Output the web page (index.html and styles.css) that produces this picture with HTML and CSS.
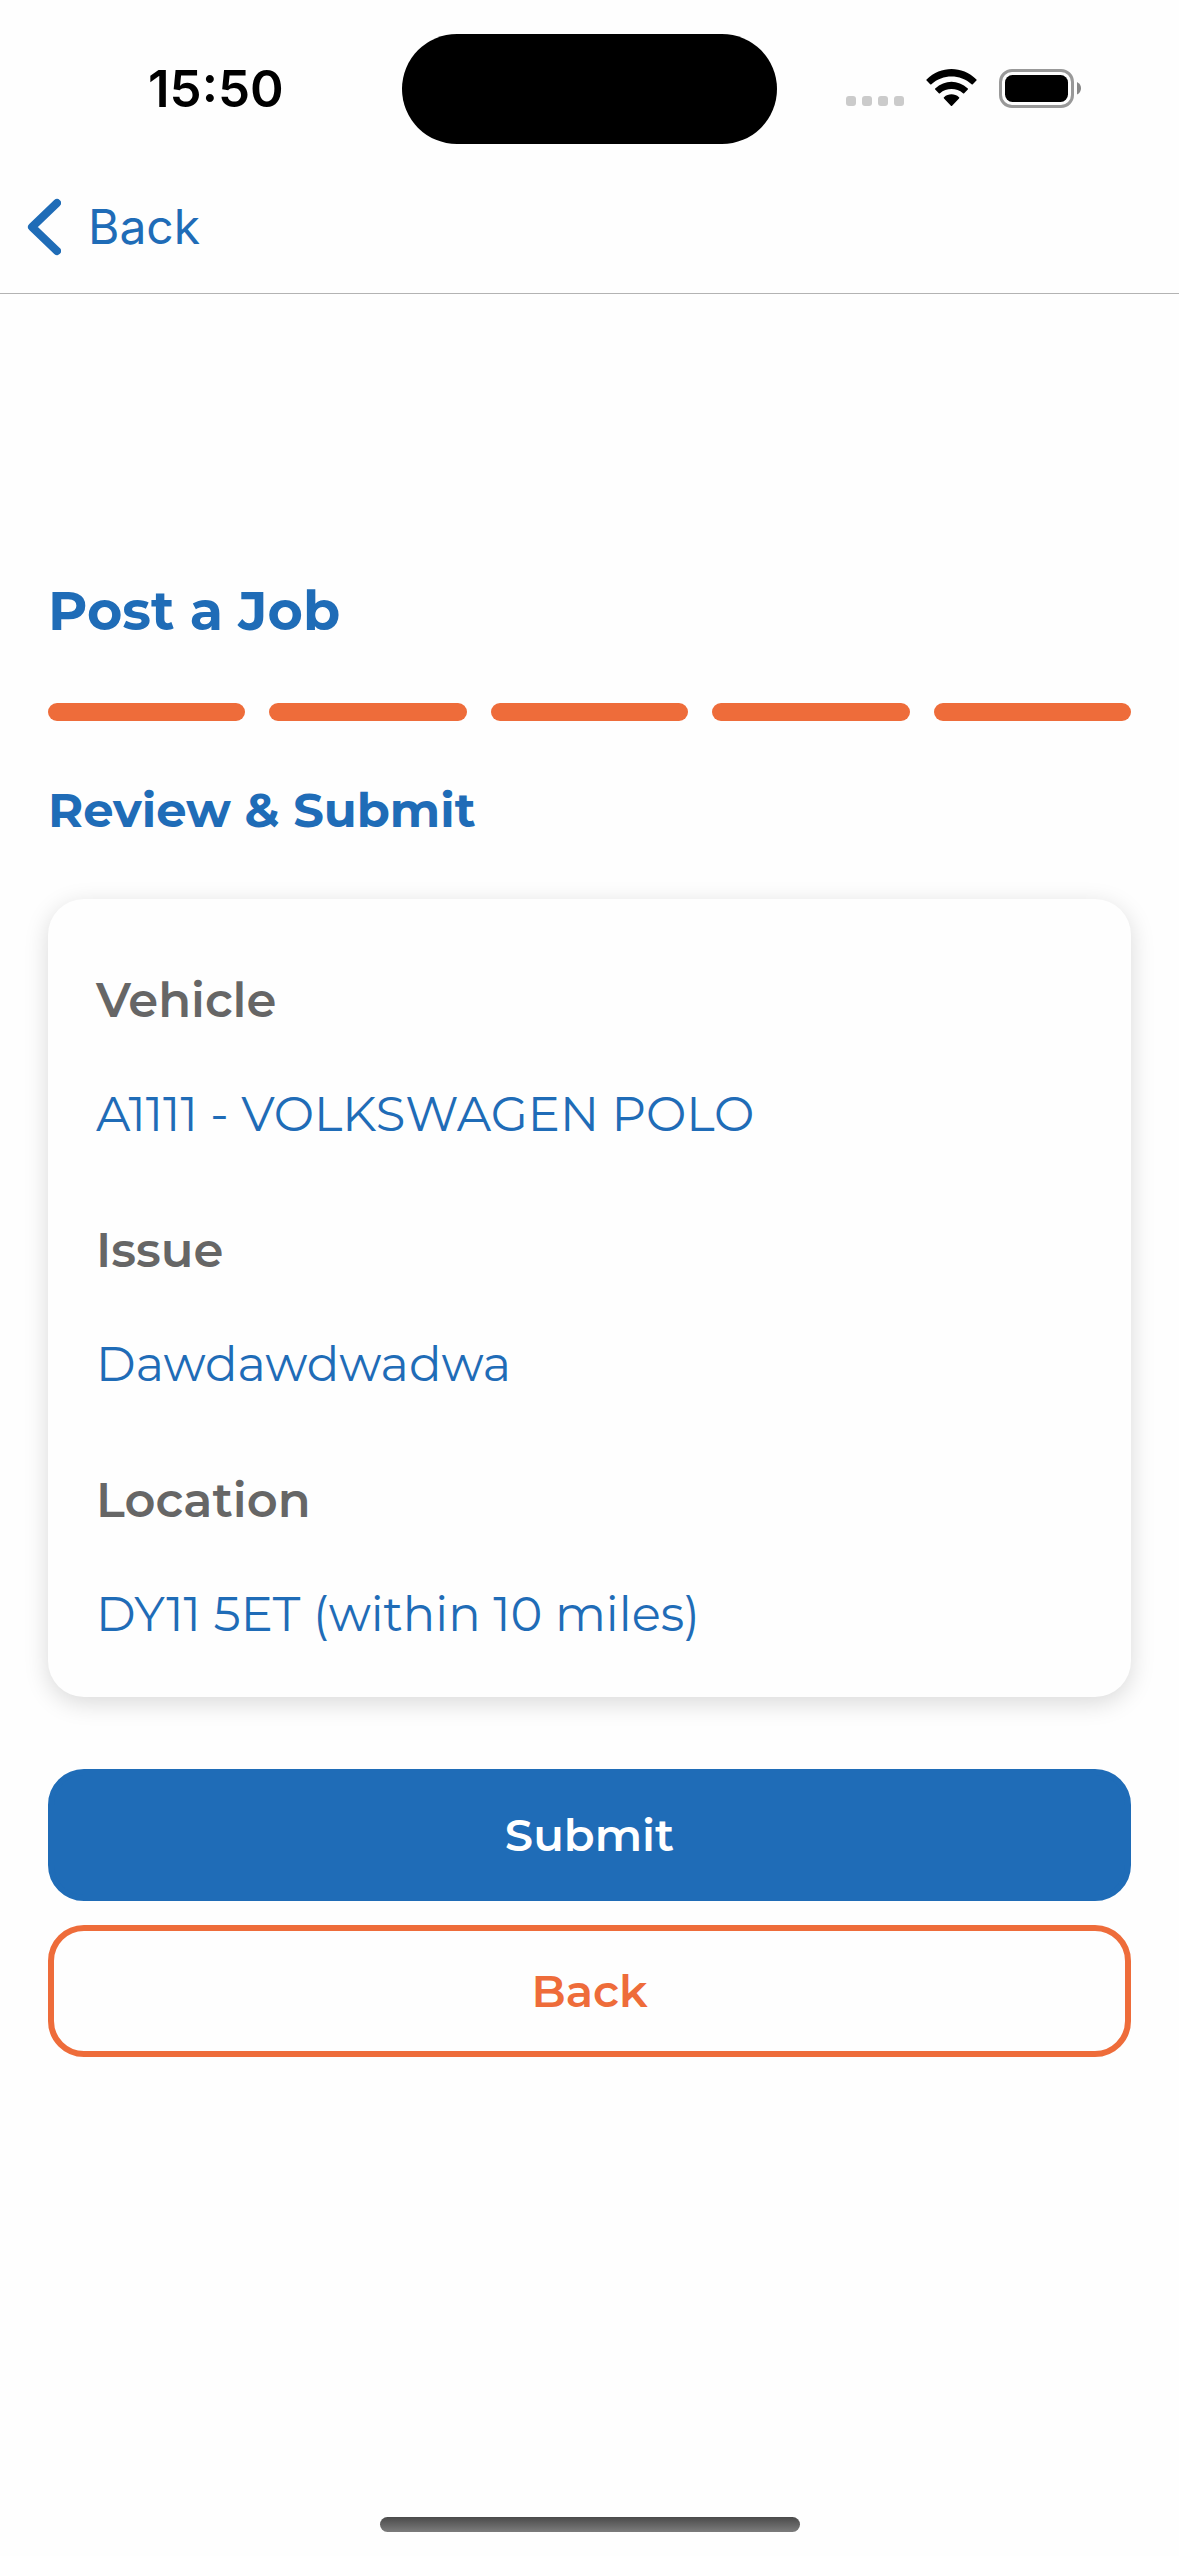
FILE: index.html
```html
<!DOCTYPE html>
<html lang="en">
<head>
  <meta charset="UTF-8" />
  <meta name="viewport" content="width=device-width, initial-scale=1" />
  <title>Post a Job</title>
  <link rel="stylesheet" href="styles.css">
</head>
<body>

  <div class="status-bar">
    <span class="time">15:50</span>
    <div class="island"></div>
    <div class="status-icons">
      <svg class="signal" width="58" height="12" viewBox="0 0 58 12" fill="#cbcbcb">
        <rect width="10" height="10" rx="3" />
        <rect x="16" width="10" height="10" rx="3" />
        <rect x="32" width="10" height="10" rx="3" />
        <rect x="48" width="10" height="10" rx="3" />
      </svg>
      <svg class="wifi" width="51" height="39" viewBox="0 0 51 39">
        <path d="M0.6 10.4 Q0 11 0.6 11.6 L4.2 15.3 Q4.8 15.9 5.4 15.3 C17 5 34 5 45.6 15.3 Q46.2 15.9 46.8 15.3 L50.4 11.6 Q51 11 50.4 10.4 C36 -3.4 15 -3.4 0.6 10.4 Z" />
        <path d="M9.2 19.4 Q8.6 20 9.2 20.6 L12.8 24.2 Q13.4 24.8 14 24.2 C20.5 18.6 30.5 18.6 37 24.2 Q37.6 24.8 38.2 24.2 L41.8 20.6 Q42.4 20 41.8 19.4 C32 10.4 19 10.4 9.2 19.4 Z" />
        <path d="M18 28.2 Q17.3 28.8 18 29.5 L24.9 36.7 Q25.5 37.3 26.1 36.7 L33 29.5 Q33.7 28.8 33 28.2 C28.6 24.4 22.4 24.4 18 28.2 Z" />
      </svg>
      <svg class="battery" width="82" height="39" viewBox="0 0 82 39">
        <rect x="1.5" y="1.5" width="72" height="36" rx="11.5" fill="none" stroke="#999" stroke-width="3" />
        <rect x="6" y="6" width="63" height="27" rx="7.5" />
        <path d="M78 13 Q82 15 82 19.2 Q82 23.5 78 25.5 Z" fill="#888" />
      </svg>
    </div>
  </div>

  <header class="nav-bar">
    <a href="#" class="nav-back">
      <svg width="34" height="58" viewBox="0 0 34 58" fill="none" stroke="currentColor" stroke-width="8" stroke-linecap="round" stroke-linejoin="round">
        <path d="M30 5 L5 29 L30 53" />
      </svg>
      <span>Back</span>
    </a>
  </header>

  <main class="content">
    <h1>Post a Job</h1>

    <div class="steps">
      <span class="step"></span>
      <span class="step"></span>
      <span class="step"></span>
      <span class="step"></span>
      <span class="step"></span>
    </div>

    <h2>Review &amp; Submit</h2>

    <dl class="card">
      <div class="field">
        <dt>Vehicle</dt>
        <dd>A1111 - VOLKSWAGEN POLO</dd>
      </div>
      <div class="field">
        <dt>Issue</dt>
        <dd>Dawdawdwadwa</dd>
      </div>
      <div class="field">
        <dt>Location</dt>
        <dd>DY11 5ET (within 10 miles)</dd>
      </div>
    </dl>

    <div class="actions">
      <button type="button" class="btn btn-primary">Submit</button>
      <button type="button" class="btn btn-outline">Back</button>
    </div>
  </main>

  <div class="home-indicator"></div>

</body>
</html>
```

FILE: styles.css
```css
* {
  box-sizing: border-box;
}

body {
  margin: 0;
  min-height: 100vh;
  display: flex;
  flex-direction: column;
  background-color: #fefefe;
  font-family: Montserrat, Inter, sans-serif;
  color: #1f6cb7;
}

/* phone status bar */
.status-bar {
  display: grid;
  grid-template-columns: 1fr 375px 1fr;
  align-items: center;
  padding: 34px 0 17px;
  color: #000;
}

.time {
  padding-left: 148px;
  font-family: Inter, sans-serif;
  font-size: 51px;
  font-weight: 600;
  line-height: 60px;
}

.island {
  height: 110px;
  border-radius: 55px;
  background-color: #000;
}

.status-icons {
  display: flex;
  justify-content: flex-end;
  align-items: flex-end;
  gap: 22px;
  padding: 0 98px 2px 0;
}

/* navigation */
.nav-bar {
  border-bottom: 1px solid #b3b3b3;
  padding: 36px 27px;
}

.nav-back {
  display: flex;
  align-items: center;
  gap: 27px;
  width: fit-content;
  color: #1f6cb7;
  font-family: Inter, sans-serif;
  font-size: 48px;
  line-height: 60px;
  text-decoration: none;
}

/* form */
.content {
  flex: 1;
  padding: 284px 48px 72px;
}

h1 {
  margin: 0 0 59px;
  font-size: 54px;
  font-weight: 700;
  line-height: 66px;
}

.steps {
  display: flex;
  gap: 24px;
}

.step {
  flex: 1;
  height: 18px;
  border-radius: 9px;
  background-color: #ee6c3a;
}

h2 {
  margin: 59px 0;
  font-size: 48px;
  font-weight: 700;
  line-height: 60px;
}

.card {
  display: flex;
  flex-direction: column;
  gap: 76px;
  margin: 0 0 72px;
  padding: 71px 48px 53px;
  border-radius: 36px;
  background-color: #fefefe;
  box-shadow: 0 6px 24px rgba(0, 0, 0, 0.15);
  font-size: 48px;
  line-height: 60px;
}

.field {
  display: flex;
  flex-direction: column;
  gap: 54px;
}

.field dt {
  color: #666;
  font-weight: 600;
}

.field dd {
  margin: 0;
  font-weight: 400;
}

.actions {
  display: flex;
  flex-direction: column;
  gap: 24px;
}

.btn {
  padding: 30px;
  border: 6px solid #1f6cb7;
  border-radius: 36px;
  font-family: inherit;
  font-size: 45px;
  font-weight: 600;
  line-height: 60px;
  cursor: pointer;
}

.btn-primary {
  background-color: #1f6cb7;
  color: #fff;
}

.btn-outline {
  border-color: #ee6c3a;
  background-color: transparent;
  color: #ee6c3a;
}

.home-indicator {
  width: 420px;
  height: 15px;
  margin: 0 auto 24px;
  border-radius: 8px;
  background: linear-gradient(#4a4a4a, #7c7c7c);
}
```
